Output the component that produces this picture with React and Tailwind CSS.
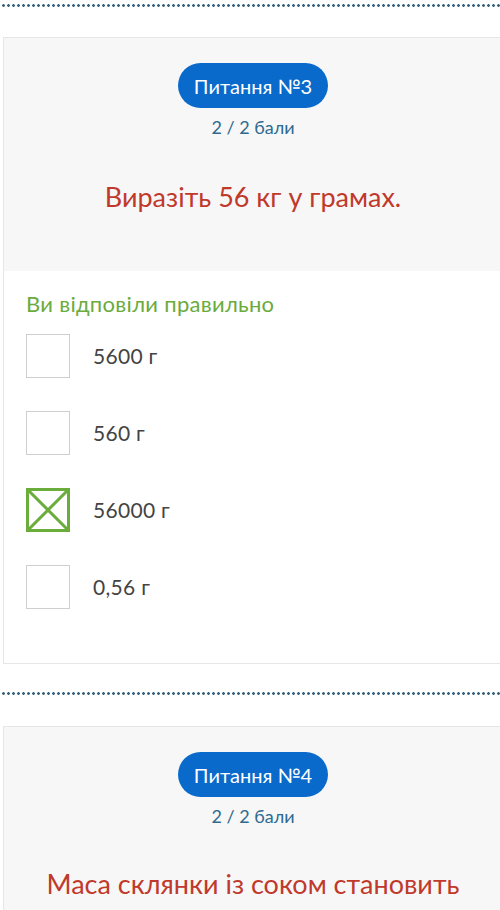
const options = [
  { id: 'a', label: '5600 г', checked: false },
  { id: 'b', label: '560 г', checked: false },
  { id: 'c', label: '56000 г', checked: true },
  { id: 'd', label: '0,56 г', checked: false },
];

function Dots() {
  return (
    <div className="h-[3px] w-full bg-[radial-gradient(circle,#35627e_1.1px,transparent_1.6px)] bg-[length:5px_3px] bg-[position:1px_0]" />
  );
}

function Header({ num, title, gap }) {
  return (
    <div className="w-[498px] bg-[#f7f7f7] flex flex-col items-center pt-[25px]">
      <div className="h-[45px] px-[16px] rounded-full bg-[#0a6acb] text-white text-[20px] flex items-center">
        Питання №{num}
      </div>
      <div className="mt-[6px] text-[18px] text-[#2d6b8f]">2 / 2 бали</div>
      <div className={`${gap} text-[27px] text-[#c0392b] leading-[34px]`}>{title}</div>
    </div>
  );
}

function Box({ checked }) {
  if (checked) {
    return (
      <svg width="44" height="44" viewBox="0 0 44 44" className="shrink-0">
        <rect x="1.5" y="1.5" width="41" height="41" fill="white" stroke="#6aad3b" strokeWidth="3" />
        <path d="M3 3 L41 41 M41 3 L3 41" stroke="#6aad3b" strokeWidth="3" />
      </svg>
    );
  }
  return <div className="w-[44px] h-[44px] border border-[#cfcfcf] bg-white shrink-0" />;
}

export default function App() {
  return (
    <div className="w-[500px] h-[910px] overflow-hidden bg-white font-['Lato','Noto_Sans',sans-serif]">
      <div className="pt-[4px]">
        <Dots />
      </div>

      <div className="mt-[30px] ml-[3px] w-[520px] border border-[#e6e6e6]">
        <div className="h-[233px] bg-[#f7f7f7]">
          <Header num="3" title="Виразіть 56 кг у грамах." gap="mt-[39px]" />
        </div>
        <div className="bg-white pl-[22px] pt-[19px] pb-[54px]">
          <div className="text-[22px] tracking-[0.3px] text-[#6aab3c] leading-[28px]">Ви відповіли правильно</div>
          <div className="mt-[16px] flex flex-col gap-[33px]">
            {options.map((o) => (
              <div key={o.id} className="flex items-center gap-[23px]">
                <Box checked={o.checked} />
                <span className="text-[21px] tracking-[0.3px] text-[#444]">{o.label}</span>
              </div>
            ))}
          </div>
        </div>
      </div>

      <div className="mt-[28px]">
        <Dots />
      </div>

      <div className="mt-[31px] ml-[3px] w-[520px] border border-[#e6e6e6] bg-[#f7f7f7] h-[300px]">
        <Header num="4" title="Маса склянки із соком становить" gap="mt-[37px]" />
      </div>
    </div>
  );
}
